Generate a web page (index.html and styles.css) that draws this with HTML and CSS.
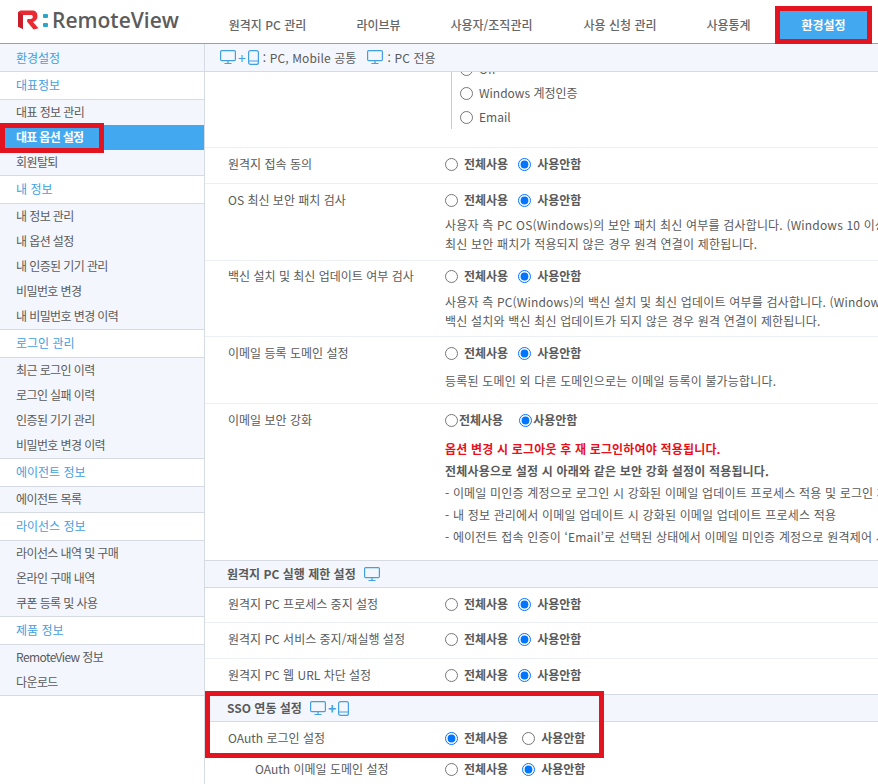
FILE: index.html
```html
<!DOCTYPE html>
<html lang="ko">
<head>
<meta charset="utf-8">
<title>RemoteView</title>
<link rel="stylesheet" href="styles.css">
</head>
<body>
<svg class="defs" width="0" height="0" aria-hidden="true">
  <symbol id="pc" viewBox="0 0 16 15">
    <rect x="0.6" y="0.6" width="14.8" height="10" rx="1.2" fill="none" stroke="currentColor" stroke-width="1.2"/>
    <path d="M8 10.5V13.4M4.5 13.5H11.5" fill="none" stroke="currentColor" stroke-width="1.2"/>
  </symbol>
  <symbol id="mobile" viewBox="0 0 11 15">
    <rect x="0.6" y="0.6" width="9.8" height="13.8" rx="2" fill="none" stroke="currentColor" stroke-width="1.2"/>
    <path d="M0.8 11H10.2" fill="none" stroke="currentColor" stroke-width="1"/>
  </symbol>
</svg>
<header class="top">
  <div class="logo">
    <svg class="logo-r" viewBox="0 0 21 20" width="21" height="20">
      <path d="M0 2L2.5 0.5H14.5C18 0.5 19.5 3 19.5 6C19.5 9 18 11 15 12L20.5 18.2L15.5 19.5L9 11.5L9.5 9H12.5C14.3 9 14.8 8 14.8 6.8C14.8 5.6 14 5 12.8 5H5V19L0 16.5Z" fill="#ea2a33"/>
      <path d="M0 2L5 5V19L0 16.5Z" fill="#c81e2a"/>
    </svg>
    <span class="logo-colon"><i></i><i></i></span>
    <span class="logo-text">RemoteView</span>
  </div>
  <nav class="tabs">
    <a class="tab t1">원격지 PC 관리</a>
    <a class="tab t2">라이브뷰</a>
    <a class="tab t3">사용자/조직관리</a>
    <a class="tab t4">사용 신청 관리</a>
    <a class="tab t5">사용통계</a>
    <a class="tab t6 active">환경설정</a>
  </nav>
</header>
<div class="body">
  <aside class="side">
    <div class="side-title">환경설정</div>
    <div class="side-head">대표정보</div>
    <ul class="side-list">
      <li>대표 정보 관리</li>
      <li class="current">대표 옵션 설정</li>
      <li>회원탈퇴</li>
    </ul>
    <div class="side-head">내 정보</div>
    <ul class="side-list">
      <li>내 정보 관리</li>
      <li>내 옵션 설정</li>
      <li>내 인증된 기기 관리</li>
      <li>비밀번호 변경</li>
      <li>내 비밀번호 변경 이력</li>
    </ul>
    <div class="side-head">로그인 관리</div>
    <ul class="side-list">
      <li>최근 로그인 이력</li>
      <li>로그인 실패 이력</li>
      <li>인증된 기기 관리</li>
      <li>비밀번호 변경 이력</li>
    </ul>
    <div class="side-head">에이전트 정보</div>
    <ul class="side-list">
      <li>에이전트 목록</li>
    </ul>
    <div class="side-head">라이선스 정보</div>
    <ul class="side-list">
      <li>라이선스 내역 및 구매</li>
      <li>온라인 구매 내역</li>
      <li>쿠폰 등록 및 사용</li>
    </ul>
    <div class="side-head">제품 정보</div>
    <ul class="side-list">
      <li>RemoteView 정보</li>
      <li>다운로드</li>
    </ul>
  </aside>
  <main class="main">
    <div class="legend">
      <svg class="ico-pc"><use href="#pc"/></svg><span class="plus">+</span><svg class="ico-m"><use href="#mobile"/></svg>
      <span class="legend-text">: PC, Mobile 공통</span>
      <svg class="ico-pc second"><use href="#pc"/></svg>
      <span class="legend-text">: PC 전용</span>
    </div>
    <div class="auth-clip">
      <div class="auth-list">
        <label class="auth-item"><input type="radio" name="auth">Off</label>
        <label class="auth-item"><input type="radio" name="auth">Windows 계정인증</label>
        <label class="auth-item"><input type="radio" name="auth">Email</label>
      </div>
    </div>
    <div class="row r-consent">
      <div class="label">원격지 접속 동의</div>
      <div class="ctrl"><div class="radios">
        <label><input type="radio" name="r1">전체사용</label>
        <label><input type="radio" name="r1" checked>사용안함</label>
      </div></div>
    </div>
    <div class="row r-patch">
      <div class="label">OS 최신 보안 패치 검사</div>
      <div class="ctrl"><div class="radios">
        <label><input type="radio" name="r2">전체사용</label>
        <label><input type="radio" name="r2" checked>사용안함</label>
      </div>
      <div class="descs">
        <p class="desc">사용자 측 PC OS(Windows)의 보안 패치 최신 여부를 검사합니다. (Windows 10 이상)</p>
        <p class="desc">최신 보안 패치가 적용되지 않은 경우 원격 연결이 제한됩니다.</p>
      </div></div>
    </div>
    <div class="row r-vaccine">
      <div class="label">백신 설치 및 최신 업데이트 여부 검사</div>
      <div class="ctrl"><div class="radios">
        <label><input type="radio" name="r3">전체사용</label>
        <label><input type="radio" name="r3" checked>사용안함</label>
      </div>
      <div class="descs">
        <p class="desc">사용자 측 PC(Windows)의 백신 설치 및 최신 업데이트 여부를 검사합니다. (Windows 10 이상)</p>
        <p class="desc">백신 설치와 백신 최신 업데이트가 되지 않은 경우 원격 연결이 제한됩니다.</p>
      </div></div>
    </div>
    <div class="row r-domain">
      <div class="label">이메일 등록 도메인 설정</div>
      <div class="ctrl"><div class="radios">
        <label><input type="radio" name="r4">전체사용</label>
        <label><input type="radio" name="r4" checked>사용안함</label>
      </div>
      <div class="descs">
        <p class="desc">등록된 도메인 외 다른 도메인으로는 이메일 등록이 불가능합니다.</p>
      </div></div>
    </div>
    <div class="row r-security">
      <div class="label">이메일 보안 강화</div>
      <div class="ctrl"><div class="radios tight">
        <label><input type="radio" name="r5">전체사용</label>
        <label><input type="radio" name="r5" checked>사용안함</label>
      </div>
      <div class="notes">
        <p class="note red">옵션 변경 시 로그아웃 후 재 로그인하여야 적용됩니다.</p>
        <p class="note strong">전체사용으로 설정 시 아래와 같은 보안 강화 설정이 적용됩니다.</p>
        <p class="note">- 이메일 미인증 계정으로 로그인 시 강화된 이메일 업데이트 프로세스 적용 및 로그인 제한</p>
        <p class="note">- 내 정보 관리에서 이메일 업데이트 시 강화된 이메일 업데이트 프로세스 적용</p>
        <p class="note">- 에이전트 접속 인증이 ‘Email’로 선택된 상태에서 이메일 미인증 계정으로 원격제어 시도 시 제한</p>
      </div></div>
    </div>
    <div class="section">원격지 PC 실행 제한 설정<svg class="ico-pc"><use href="#pc"/></svg></div>
    <div class="row r-exec first-exec">
      <div class="label">원격지 PC 프로세스 중지 설정</div>
      <div class="ctrl"><div class="radios">
        <label><input type="radio" name="r6">전체사용</label>
        <label><input type="radio" name="r6" checked>사용안함</label>
      </div></div>
    </div>
    <div class="row r-exec">
      <div class="label">원격지 PC 서비스 중지/재실행 설정</div>
      <div class="ctrl"><div class="radios">
        <label><input type="radio" name="r7">전체사용</label>
        <label><input type="radio" name="r7" checked>사용안함</label>
      </div></div>
    </div>
    <div class="row r-exec last-exec">
      <div class="label">원격지 PC 웹 URL 차단 설정</div>
      <div class="ctrl"><div class="radios">
        <label><input type="radio" name="r8">전체사용</label>
        <label><input type="radio" name="r8" checked>사용안함</label>
      </div></div>
    </div>
    <div class="section">SSO 연동 설정<svg class="ico-pc"><use href="#pc"/></svg><span class="plus">+</span><svg class="ico-m"><use href="#mobile"/></svg></div>
    <div class="row r-oauth">
      <div class="label">OAuth 로그인 설정</div>
      <div class="ctrl"><div class="radios wide">
        <label><input type="radio" name="r9" checked>전체사용</label>
        <label><input type="radio" name="r9">사용안함</label>
      </div></div>
    </div>
    <div class="row r-oauth">
      <div class="label sub">OAuth 이메일 도메인 설정</div>
      <div class="ctrl"><div class="radios wide">
        <label><input type="radio" name="r10">전체사용</label>
        <label><input type="radio" name="r10" checked>사용안함</label>
      </div></div>
    </div>
  </main>
</div>
<div class="mark mark-tab"></div>
<div class="mark mark-side"></div>
<div class="mark mark-sso"></div>
</body>
</html>
```
FILE: styles.css
```css
* { box-sizing: border-box; }
html, body { height: 100%; }
body {
  margin: 0;
  width: 878px;
  height: 784px;
  overflow: hidden;
  position: relative;
  background: #fff;
  color: #5a5a5a;
  font: 12px/18px "Noto Sans CJK KR", "Noto Sans", sans-serif;
}
.defs { position: absolute; }
p { margin: 0; }
ul { margin: 0; padding: 0; list-style: none; }

.top {
  height: 44px;
  display: flex;
  border-bottom: 1px solid #6aaed6;
}
.logo {
  width: 205px;
  display: flex;
  align-items: center;
  padding: 0 0 4px 18px;
}
.logo-r { flex: none; }
.logo-colon {
  display: flex;
  flex-direction: column;
  gap: 5px;
  margin: 2px 4px 0 4px;
}
.logo-colon i {
  display: block;
  width: 5px;
  height: 4px;
  border-radius: 1px;
  background: #2ba6c8;
}
.logo-text {
  font: 600 21px/24px "Open Sans", sans-serif;
  color: #5c5c5c;
}
.tabs { display: flex; flex: 1; align-items: stretch; padding-top: 6px; }
.tab {
  display: flex;
  align-items: center;
  justify-content: center;
  font-weight: 500;
  color: #666;
}
.t1 { width: 125px; }
.t2 { width: 97px; }
.t3 { width: 129px; }
.t4 { width: 128px; }
.t5 { width: 89px; }
.t6 { width: 97px; margin-left: 2px; }
.active { background: #42a8f0; color: #fff; font-weight: 700; }

.body { display: flex; height: 740px; }
.side {
  width: 205px;
  flex: none;
  border-right: 1px solid #d5dae3;
}
.side-title {
  height: 28px;
  padding-left: 16px;
  line-height: 27px;
  background: #f3f6fc;
  color: #42a0e0;
  border-bottom: 1px solid #d5dae3;
}
.side-head {
  height: 28px;
  padding-left: 16px;
  line-height: 26px;
  color: #42a0e0;
  border-bottom: 1px solid #d5dae3;
}
.side-list {
  background: #f3f6fc;
  border-bottom: 1px solid #d5dae3;
}
.side-list li {
  height: 25px;
  line-height: 24px;
  padding-left: 16px;
  letter-spacing: -0.6px;
}
.side-list .current {
  background: #42a8f0;
  color: #fff;
  font-weight: 700;
  letter-spacing: -0.7px;
}

.main { flex: 1; min-width: 0; overflow: hidden; }
.legend {
  height: 28px;
  display: flex;
  align-items: center;
  padding-left: 15px;
  background: #f3f6fc;
  border-bottom: 1px solid #d5dae3;
  white-space: nowrap;
}
.ico-pc { width: 16px; height: 15px; color: #42a0e0; flex: none; }
.ico-m { width: 11px; height: 15px; color: #42a0e0; flex: none; }
.plus { color: #42a0e0; font-size: 14px; margin: 0 2px; }
.legend-text { margin-left: 4px; letter-spacing: 0.12px; }
.legend .second { margin-left: 11px; }

.auth-clip {
  height: 76px;
  padding-left: 246px;
  overflow: hidden;
  border-bottom: 1px solid #eceff3;
}
.auth-list {
  height: 57px;
  border-left: 1px solid #ccc;
  padding-left: 8px;
  display: flex;
  flex-direction: column;
  justify-content: flex-end;
}
.auth-item { display: flex; align-items: center; height: 24px; flex: none; }
.auth-item input { margin: 0 6px 0 0; }

.row {
  display: flex;
  border-bottom: 1px solid #eceff3;
  padding-left: 23px;
  white-space: nowrap;
}
.r-consent { padding-top: 7px; padding-bottom: 10px; }
.r-patch { padding-top: 7px; padding-bottom: 7px; }
.r-patch .descs { margin-top: 7px; }
.r-patch .desc, .r-vaccine .desc { line-height: 18px; }
.r-vaccine { padding-top: 6px; padding-bottom: 6px; }
.r-vaccine .descs { margin-top: 8px; }
.r-domain { padding-top: 7px; padding-bottom: 13px; }
.r-domain .descs { margin-top: 9px; }
.r-security { padding-top: 7px; padding-bottom: 12px; border-bottom: 0; }
.r-exec { padding-top: 7px; padding-bottom: 10px; }
.first-exec { padding-bottom: 9px; }
.last-exec { border-bottom: 0; }
.r-oauth { padding-top: 7px; padding-bottom: 6px; border-bottom: 0; }
.label { width: 217px; flex: none; }
.label.sub { padding-left: 27px; }
.radios { display: flex; gap: 10px; font-weight: 700; height: 18px; }
.radios label { display: flex; align-items: center; }
.radios input { margin: 0 6px 0 0; }
.radios.tight { gap: 16px; }
.radios.tight input { margin-right: 1px; }
.radios.wide { gap: 14px; }
.desc { line-height: 19px; letter-spacing: 0.18px; }
.r-patch .desc + .desc, .r-vaccine .desc + .desc { margin-top: 1px; }
.notes { margin-top: 9px; }
.note { line-height: 22px; letter-spacing: 0.18px; }
.note.red { color: #e8101c; font-weight: 700; }
.note.strong { font-weight: 700; }

.section {
  height: 28px;
  display: flex;
  align-items: center;
  gap: 8px;
  padding-left: 22px;
  background: #f3f6fc;
  border-top: 1px solid #d5dae3;
  border-bottom: 1px solid #d5dae3;
  font-weight: 700;
}
.section .plus { margin: 0 -6px; }

.mark { position: absolute; border: 5px solid #e3131f; }
.mark-tab { left: 775px; top: 6px; width: 97px; height: 38px; }
.mark-side { left: 0; top: 123px; width: 104px; height: 30px; }
.mark-sso { left: 205px; top: 691px; width: 399px; height: 67px; }
```
